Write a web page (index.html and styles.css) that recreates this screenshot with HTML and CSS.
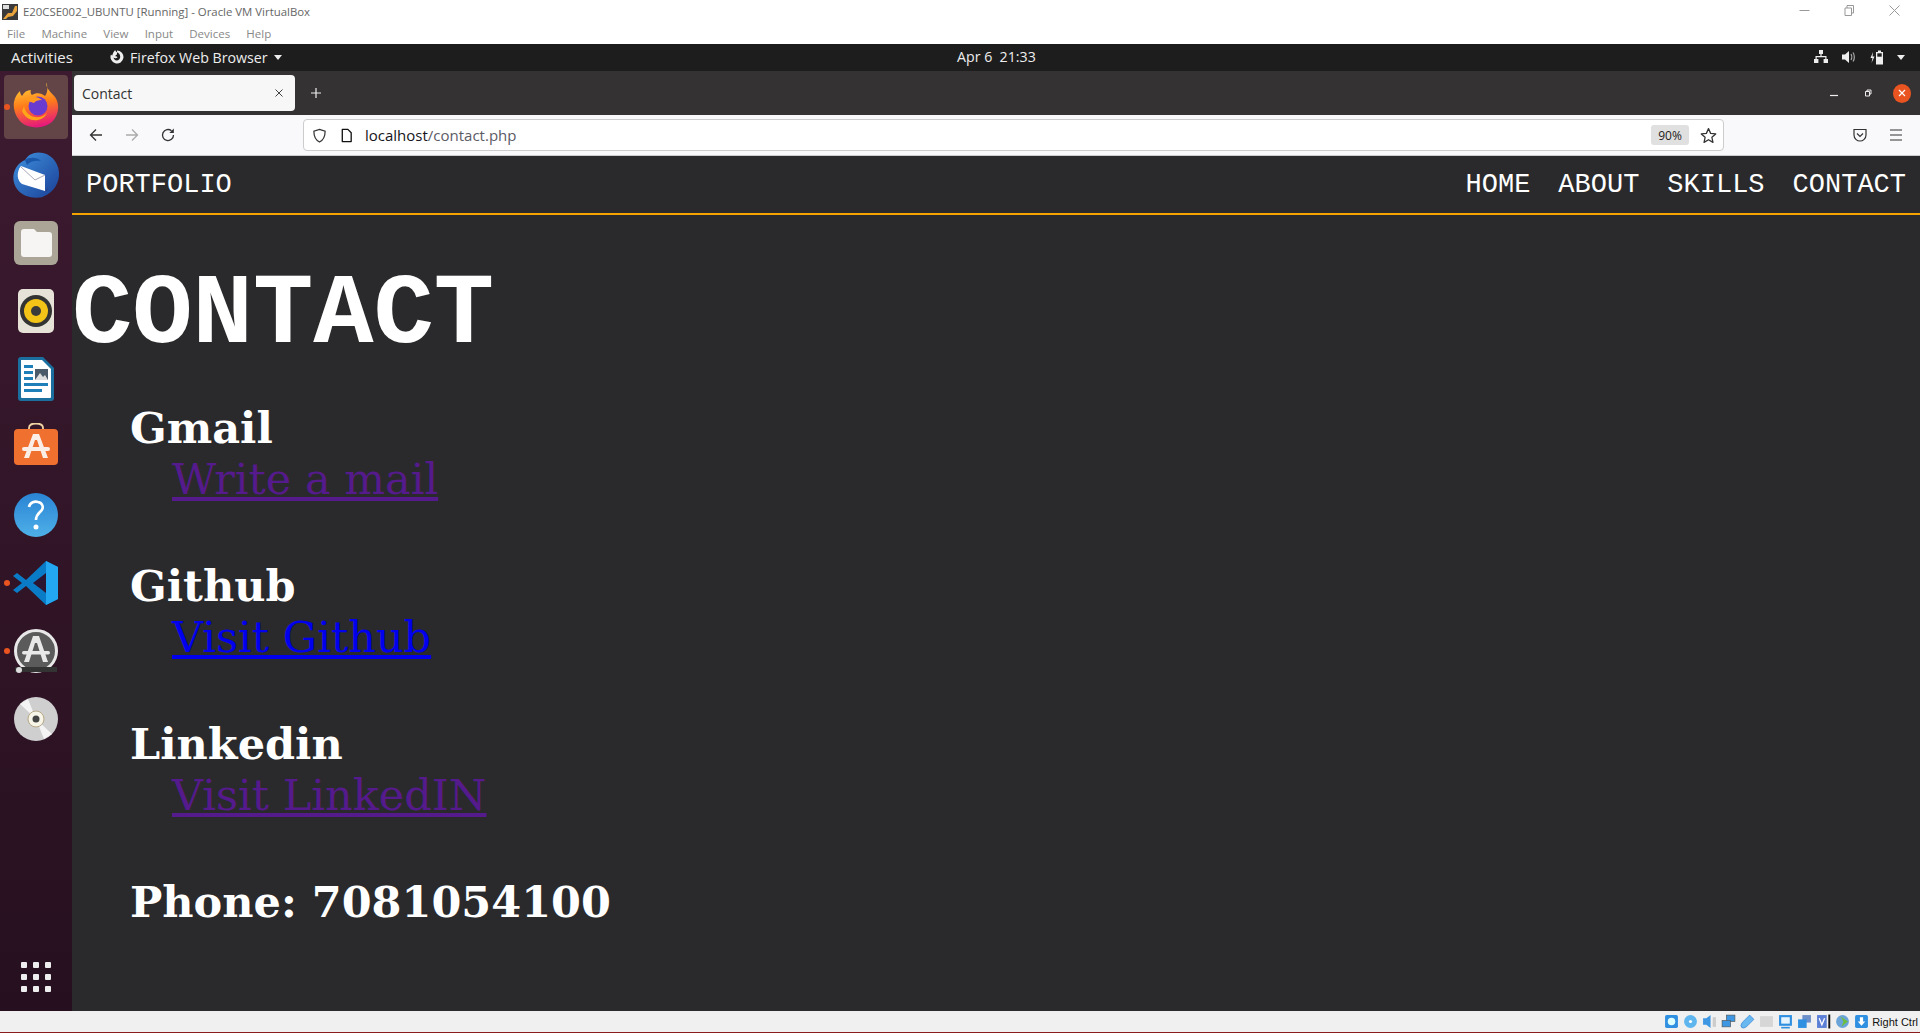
FILE: index.html
```html
<!DOCTYPE html>
<html lang="en">
<head>
<meta charset="utf-8">
<title>Contact</title>
<link rel="stylesheet" href="styles.css">
</head>
<body>
<div class="screen">
  <header class="vb-title">
    <svg class="vb-logo" viewBox="0 0 16 16"><rect width="16" height="16" fill="#3a3a3a"/><path d="M1 15 L6 9 L10 9 L13 2 L15 2 L15 7 L11 12 L6 13 L4 15Z" fill="#e8a33a"/><rect x="1" y="1" width="6" height="4" fill="#ddd"/></svg>
    <span class="vb-title-text">E20CSE002_UBUNTU [Running] - Oracle VM VirtualBox</span>
    <div class="vb-controls">
      <svg viewBox="0 0 11 11"><path d="M0.500 5.500H10.500" stroke="#999" fill="none"/></svg>
      <svg viewBox="0 0 11 11"><path d="M1 3H7.500V10.500H1ZM3 3V0.500H9.500V8H7.500" stroke="#999" fill="none"/></svg>
      <svg viewBox="0 0 11 11"><path d="M0.500 0.500L10.500 10.500M10.500 0.500L0.500 10.500" stroke="#999" fill="none"/></svg>
    </div>
  </header>
  <nav class="vb-menu"><span>File</span><span>Machine</span><span>View</span><span>Input</span><span>Devices</span><span>Help</span></nav>

  <div class="gnome-bar">
    <span class="activities">Activities</span>
    <span class="app-menu">
      <svg class="app-icon" viewBox="0 0 16 16"><path fill-rule="evenodd" d="M8 1.500A6.500 6.500 0 1 1 2 5.500C2.400 6 2.800 6.400 3.300 6.600C3.500 4.800 4.600 2.600 6.300 1C6.400 2 6.900 2.700 8 3.300C10 4.200 11.300 5.800 11.200 8C11 10.200 9.400 11.500 7.800 11.500C6 11.500 4.600 10 4.600 8.500C5.500 9.400 7.600 9.600 8.500 8.300C8.100 7.400 7.100 7.100 6.200 7.300C6.400 6.300 7.200 5.700 8 5.400Z" fill="#eee"/></svg>
      Firefox Web Browser <i class="caret"></i>
    </span>
    <span class="clock">Apr 6&nbsp; 21:33</span>
    <span class="tray">
      <svg viewBox="0 0 16 16" class="tray-net"><path d="M6 1H10V5H8.600V7H13.500V10H15V14H10.600V10H12.300V8.200H3.700V10H5.400V14H1V10H2.500V7H7.400V5H6Z" fill="#eee"/></svg>
      <svg viewBox="0 0 16 16" class="tray-vol"><path d="M1 5.500H4L8 2V14L4 10.500H1Z" fill="#eee"/><path d="M10 5C11 6.500 11 9.500 10 11M12 3.500C13.800 6 13.800 10 12 12.500" stroke="#aaa" stroke-width="1.200" fill="none"/></svg>
      <svg viewBox="0 0 16 16" class="tray-bat"><path d="M7 3H9V1.500H12V3H14V15.500H7Z" fill="#eee"/><rect x="8.300" y="4.300" width="4.400" height="3.400" fill="#1d1d1d"/><path d="M4 3L1.500 9H3.500L2.500 14L5.500 7.500H3.500Z" fill="#eee"/></svg>
      <i class="caret caret-tray"></i>
    </span>
  </div>

  <div class="desktop">
    <aside class="dock">
      <div class="dock-item active"><i class="run-dot"></i>
        <svg viewBox="-1 1 48 48"><defs><linearGradient id="ff" x1="0.300" y1="0" x2="0.500" y2="1"><stop offset="0" stop-color="#ffd83a"/><stop offset="0.500" stop-color="#ff7b1a"/><stop offset="1" stop-color="#e5167e"/></linearGradient></defs><path d="M33 0C33 7 38 10 42 15C47 22 46 33 39 40C31 47 17 47 9 41C2 35 0 26 1 20C2 15 4 12 7 9C7 11 8 13 9 14C11 10 14 8 18 8C17 10 18 12 19 13C23 10 29 11 32 14C35 10 35 5 33 0Z" fill="url(#ff)"/><circle cx="25" cy="24" r="9.500" fill="#6a3bd0"/><path d="M12 17C17 14 24 14 29 18C25 18 22 19 21 21C18 20 14 19 12 17Z" fill="#ff9a20"/><path d="M11 24C13 35 26 39 34 31C29 41 14 41 9 29Z" fill="#ffa51a"/></svg></div>
      <div class="dock-item">
        <svg viewBox="0 0 48 48"><defs><linearGradient id="tb" x1="0" y1="0" x2="1" y2="1"><stop offset="0" stop-color="#3f92e0"/><stop offset="1" stop-color="#1a3f96"/></linearGradient></defs><path d="M13 9C16 3 24 0 31 2C41 4 48 14 47 25C46 35 39 44 29 46C33 42 35 40 36 36L31 46C22 48 11 46 5 38C0 31 0 21 6 14C8 12 10 10 13 9Z" fill="url(#tb)"/><path d="M9 15L33 24V40L10 33C5 30 4 21 9 15Z" fill="#fff"/><path d="M9 16L23 29L33 24" stroke="#aab" fill="none"/><path d="M13 9C17 6 25 6 29 10C24 9 18 10 15 14Z" fill="#1a57a8"/></svg></div>
      <div class="dock-item">
        <svg viewBox="0 0 48 48"><rect x="2" y="2" width="44" height="44" rx="6" fill="#aaa596"/><path d="M9 13Q9 10 12 10H22L25 13H37Q40 13 40 16V35Q40 38 37 38H12Q9 38 9 35Z" fill="#f6f5f3"/></svg></div>
      <div class="dock-item">
        <svg viewBox="0 0 48 48"><rect x="6" y="2" width="36" height="44" rx="5" fill="#e6e2d8"/><circle cx="24" cy="24" r="16" fill="#333"/><circle cx="24" cy="24" r="12" fill="#f3c318"/><circle cx="24" cy="24" r="5" fill="#3a3a3a"/></svg></div>
      <div class="dock-item">
        <svg viewBox="0 0 48 48"><path d="M6 5Q6 2 9 2H31L42 13V43Q42 46 39 46H9Q6 46 6 43Z" fill="#1b6f9f"/><path d="M9 5H30L39 14V42Q39 43 38 43H10Q9 43 9 42Z" fill="#fff"/><path d="M12 10H21V13H12ZM12 16H21V19H12ZM12 22H21V25H12ZM12 28H36V31H12ZM12 34H30V37H12Z" fill="#1f7fb8"/><rect x="23" y="14" width="13" height="11" fill="#4a5a68"/><path d="M23 25L28 18L31 22L33 20L36 25Z" fill="#ddd"/></svg></div>
      <div class="dock-item">
        <svg viewBox="0 0 48 48"><path d="M17 8V5Q17 0.500 24 0.500Q31 0.500 31 5V8" stroke="#f2d3a4" stroke-width="1.800" fill="none"/><rect x="2" y="6" width="44" height="36" rx="4" fill="#f0702f"/><path d="M21 11H27L36 35H31L25 17H23L17 35H12Z" fill="#fbeee6"/><rect x="10" y="24" width="28" height="4" rx="2" fill="#fbeee6"/></svg></div>
      <div class="dock-item">
        <svg viewBox="0 0 48 48"><defs><linearGradient id="hp" x1="0" y1="0" x2="0" y2="1"><stop offset="0" stop-color="#2a84d4"/><stop offset="1" stop-color="#4eb0e8"/></linearGradient></defs><circle cx="24" cy="24" r="22" fill="url(#hp)"/><path d="M17 16C18 11 23 10 26 11C31 12 32 17 29 20C26 23 24 24 24 29" stroke="#fff" stroke-width="2.600" fill="none"/><circle cx="24" cy="36" r="2.500" fill="#fff"/></svg></div>
      <div class="dock-item"><i class="run-dot"></i>
        <svg viewBox="0 0 48 48"><path d="M34 2L46 8V40L34 46L14 27L5 34L1 31L10 24L1 17L5 14L14 21Z" fill="#0a7bc6"/><path d="M34 2L46 8V40L34 46Z" fill="#22a7f0"/><path d="M34 14L21 24L34 34Z" fill="#2c1530"/></svg></div>
      <div class="dock-item"><i class="run-dot"></i>
        <svg viewBox="0 0 48 48"><circle cx="24" cy="24" r="20.500" fill="#5b5b5b" stroke="#e8e8e8" stroke-width="3"/><path d="M21 9H27L36 35H31L25 16H23L17 35H12Z" fill="#e8e8e8"/><rect x="10" y="24" width="28" height="3.500" rx="1.700" fill="#e8e8e8"/><rect x="3" y="40" width="42" height="5" fill="#333"/><circle cx="7" cy="43" r="3" fill="#ddd"/></svg></div>
      <div class="dock-item">
        <svg viewBox="0 0 48 48"><circle cx="24" cy="24" r="22" fill="#cfcfcf"/><path d="M8 9L24 24L16 4ZM40 39L24 24L32 44Z" fill="#f4f4f4"/><circle cx="24" cy="24" r="8" fill="#f7f4e8" stroke="#b7a888"/><circle cx="24" cy="24" r="3.500" fill="#444"/></svg></div>
      <div class="dock-grid"><i></i><i></i><i></i><i></i><i></i><i></i><i></i><i></i><i></i></div>
    </aside>

    <div class="browser">
      <div class="tabbar">
        <div class="tab"><span>Contact</span>
          <svg viewBox="0 0 10 10"><path d="M1.500 1.500L8.500 8.500M8.500 1.500L1.500 8.500" stroke="#444" fill="none"/></svg></div>
        <svg class="new-tab" viewBox="0 0 12 12"><path d="M6 1V11M1 6H11" stroke="#eee" stroke-width="1.200" fill="none"/></svg>
        <div class="win-controls">
          <svg viewBox="0 0 10 10"><path d="M1 7.500H9" stroke="#eee" stroke-width="1.200" fill="none"/></svg>
          <svg viewBox="0 0 10 10"><path d="M2.500 3.500H6.500V8H2.500ZM4 3.500V2H8V6H6.500" stroke="#eee" fill="none"/></svg>
          <span class="win-close"><svg viewBox="0 0 10 10"><path d="M2 2L8 8M8 2L2 8" stroke="#fff" stroke-width="1.200" fill="none"/></svg></span>
        </div>
      </div>
      <div class="toolbar">
        <svg class="tool" viewBox="0 0 16 16"><path d="M14 8H2.500M8 2.500L2.500 8L8 13.500" stroke="#333" stroke-width="1.300" fill="none"/></svg>
        <svg class="tool tool-fwd" viewBox="0 0 16 16"><path d="M2 8H13.500M8 2.500L13.500 8L8 13.500" stroke="#aaa" stroke-width="1.300" fill="none"/></svg>
        <svg class="tool tool-reload" viewBox="0 0 16 16"><path d="M13.500 8A5.500 5.500 0 1 1 11.500 3.800" stroke="#333" stroke-width="1.300" fill="none"/><path d="M13.800 1.500V6H9.300Z" fill="#333"/></svg>
        <div class="urlbar">
          <svg class="url-shield" viewBox="0 0 16 16"><path d="M8 1.500L14 3.500C14 9 12 13 8 15C4 13 2 9 2 3.500Z" stroke="#333" stroke-width="1.300" fill="none"/></svg>
          <svg class="url-page" viewBox="0 0 16 16"><path d="M3.500 1.500H9.500L13 5V14.500H3.500Z" stroke="#111" stroke-width="1.400" fill="none" stroke-linejoin="round"/></svg>
          <span class="url-text"><b>localhost</b>/contact.php</span>
          <span class="zoom-pill">90%</span>
          <svg class="url-star" viewBox="0 0 16 16"><path d="M8 1.500L10 6L14.800 6.500L11.200 9.700L12.200 14.500L8 12L3.800 14.500L4.800 9.700L1.200 6.500L6 6Z" stroke="#333" stroke-width="1.200" fill="none" stroke-linejoin="round"/></svg>
        </div>
        <svg class="tool tool-pocket" viewBox="0 0 16 16"><path d="M2 2.500H14V8C14 11.500 11 14 8 14C5 14 2 11.500 2 8Z" stroke="#333" stroke-width="1.200" fill="none"/><path d="M5 6.500L8 9.500L11 6.500" stroke="#333" stroke-width="1.200" fill="none"/></svg>
        <svg class="tool tool-menu" viewBox="0 0 16 16"><path d="M2 3H14M2 8H14M2 13H14" stroke="#333" stroke-width="1.200" fill="none"/></svg>
      </div>
      <main class="page">
        <nav class="site-nav">
          <a class="brand">PORTFOLIO</a>
          <div class="site-links"><a>HOME</a><a>ABOUT</a><a>SKILLS</a><a>CONTACT</a></div>
        </nav>
        <h1 class="page-title">CONTACT</h1>
        <div class="contacts">
          <section class="contact"><h2>Gmail</h2><a href="#" class="link visited">Write a mail</a></section>
          <section class="contact"><h2>Github</h2><a href="#" class="link">Visit Github</a></section>
          <section class="contact"><h2>Linkedin</h2><a href="#" class="link visited">Visit LinkedIN</a></section>
          <section class="contact"><h2>Phone: 7081054100</h2></section>
        </div>
      </main>
    </div>
  </div>

  <footer class="vb-status">
    <svg viewBox="0 0 14 14"><rect x="1" y="1" width="12" height="12" rx="1.500" fill="#2f8fe0"/><circle cx="7" cy="7" r="3.500" fill="#dff"/></svg>
    <svg viewBox="0 0 14 14"><circle cx="7" cy="7" r="6" fill="#5fb5ee"/><circle cx="7" cy="7" r="1.500" fill="#fff"/></svg>
    <svg viewBox="0 0 14 14"><path d="M1 4H4L8 1V13L4 10H1Z" fill="#3d97e2"/><rect x="10" y="3" width="3" height="9" fill="#ccc"/></svg>
    <svg viewBox="0 0 14 14"><rect x="5" y="1" width="8" height="6" fill="#3d97e2" stroke="#555" stroke-width=".6"/><rect x="1" y="6" width="8" height="6" fill="#3d97e2" stroke="#555" stroke-width=".6"/></svg>
    <svg viewBox="0 0 14 14"><path d="M9 1L13 5L6 12Q3 14 1.500 12.500Q0 11 2 8Z" fill="#6ab8f0" stroke="#2f7fd0" stroke-width=".6"/></svg>
    <svg viewBox="0 0 14 14"><rect x="1" y="2" width="12" height="10" fill="#d6d6d6"/></svg>
    <svg viewBox="0 0 14 14"><rect x="1" y="1" width="12" height="10" fill="#2f8fe0"/><rect x="3" y="3" width="8" height="6" fill="#e6f4ff"/><rect x="3" y="12" width="8" height="1.500" fill="#2f8fe0"/></svg>
    <svg viewBox="0 0 14 14"><rect x="5" y="1" width="8" height="7" fill="#6d8fc9"/><rect x="1" y="5" width="8" height="8" fill="#2f8fe0"/></svg>
    <svg viewBox="0 0 14 14"><rect x="1" y="1" width="9" height="12" fill="#5b7fd6"/><path d="M3 4L5.500 10L8 4" stroke="#fff" stroke-width="1.200" fill="none"/><rect x="11.500" y="0.500" width="1.800" height="13" fill="#111"/></svg>
    <svg viewBox="0 0 14 14"><circle cx="7" cy="7" r="6" fill="#6aa4d8"/><path d="M5 2L12 7L6 12L8 7Z" fill="#6fbf3a"/></svg>
    <svg viewBox="0 0 14 14"><rect x="1" y="1" width="12" height="12" rx="1.500" fill="#2f8fe0"/><path d="M5.500 3H8.500V7H10.500L7 11L3.500 7H5.500Z" fill="#fff"/></svg>
    <span class="status-key">Right Ctrl</span>
  </footer>
</div>
</body>
</html>
```
FILE: styles.css
```css
* { box-sizing: border-box; }
html, body { margin: 0; height: 100%; overflow: hidden; }
body { font-family: "Open Sans", "Noto Sans", sans-serif; background: #fff; }
.screen { width: 1920px; height: 1033px; display: flex; flex-direction: column; }

.vb-title { height: 23px; display: flex; align-items: center; padding-left: 2px; background: #fff; }
.vb-logo { width: 16px; height: 16px; margin-right: 5px; }
.vb-title-text { font-size: 11.400px; color: #666; }
.vb-controls { margin-left: auto; display: flex; gap: 34px; padding-right: 20px; margin-top: -3px; }
.vb-controls svg { width: 11px; height: 11px; }
.vb-menu { height: 21px; display: flex; gap: 16.200px; align-items: center; padding-left: 7px; font-size: 11.500px; color: #888; background: #fff; }

.gnome-bar { height: 27px; background: #1d1d1d; color: #eee; font-size: 14.200px; display: flex; align-items: center; position: relative; padding: 0 0 1px 11px; }
.activities { width: 98px; font-size: 15px; }
.app-menu { display: flex; align-items: center; gap: 5px; }
.app-icon { width: 16px; height: 16px; }
.caret { display: inline-block; width: 0; height: 0; border: 4.500px solid transparent; border-top: 5px solid #eee; border-bottom: 0; margin-left: 1px; }
.clock { position: absolute; left: 957px; top: 4px; line-height: 18px; }
.tray { margin-left: auto; display: flex; align-items: center; gap: 12px; padding-right: 15px; }
.tray svg { width: 16px; height: 16px; }
.caret-tray { margin-left: 0; }

.desktop { flex: 1; display: flex; min-height: 0; }
.dock { width: 72px; flex: none; background: linear-gradient(#3d1a30, #26101f); display: flex; flex-direction: column; align-items: center; padding-top: 4px; position: relative; }
.dock-item { width: 64px; height: 68px; flex: none; display: flex; align-items: center; justify-content: center; position: relative; }
.dock-item svg { width: 48px; height: 48px; }
.dock-item.active { height: 64px; margin-bottom: 2px; background: #634548; border-radius: 4px; }
.run-dot { position: absolute; left: 0; top: 50%; width: 6px; height: 6px; margin-top: -3px; border-radius: 50%; background: #e95420; }
.dock-grid { margin-top: auto; margin-bottom: 19px; display: grid; grid-template-columns: repeat(3, 6px); gap: 6px; }
.dock-grid i { width: 6px; height: 6px; background: #eee; border-radius: 1px; }

.browser { flex: 1; min-width: 0; display: flex; flex-direction: column; }
.tabbar { height: 44px; background: #353234; display: flex; align-items: center; padding: 0 0 0 2px; }
.tab { width: 221px; height: 36px; background: #f7f7f7; border-radius: 4px; display: flex; align-items: center; justify-content: space-between; padding: 0 11px 0 8px; font-size: 14px; color: #333; }
.tab svg { width: 10px; height: 10px; }
.new-tab { width: 12px; height: 12px; margin-left: 15px; }
.win-controls { margin-left: auto; display: flex; align-items: center; gap: 24px; padding-right: 9px; }
.win-controls > svg { width: 10px; height: 10px; }
.win-close { width: 18px; height: 19px; border-radius: 50%; background: #e95420; display: flex; align-items: center; justify-content: center; margin-left: -4px; }
.win-close svg { width: 10px; height: 10px; }

.toolbar { height: 41px; background: #f9f9fb; border-bottom: 1px solid #ccc; display: flex; align-items: center; padding-left: 16px; }
.tool { width: 16px; height: 16px; flex: none; }
.tool-fwd { margin-left: 20px; }
.tool-reload { margin-left: 20px; }
.urlbar { width: 1421px; height: 32px; margin-left: 127px; background: #fff; border: 1px solid #ccc; border-radius: 4px; display: flex; align-items: center; padding-left: 8px; font-size: 15px; color: #5b5b66; }
.urlbar b { font-weight: 400; color: #15141a; }
.url-shield { width: 15px; height: 15px; }
.url-page { width: 15px; height: 15px; margin-left: 12px; }
.url-text { margin-left: 11px; }
.zoom-pill { margin-left: auto; width: 38px; height: 20px; background: #e0e0e0; border-radius: 3px; font-size: 12px; color: #222; display: flex; align-items: center; justify-content: center; }
.url-star { width: 17px; height: 17px; margin: 0 6px 0 11px; }
.tool-pocket { margin-left: auto; }
.tool-menu { margin-left: 20px; margin-right: 16px; }

.page { flex: 1; background: #2a2a2c; color: #fff; overflow: hidden; }
.site-nav { height: 59px; border-bottom: 2px solid #f5a300; display: flex; align-items: center; justify-content: space-between; padding: 1px 14px 0; font-family: "Liberation Mono", monospace; font-size: 27px; }
.site-links { display: flex; gap: 28px; }
.page-title { margin: 50px 0 0; font-family: "Liberation Mono", monospace; font-weight: 700; font-size: 100.500px; line-height: 100px; }
.contacts { padding-left: 58px; margin-top: 38px; font-family: "DejaVu Serif", serif; display: flex; flex-direction: column; gap: 56px; }
.contact h2 { margin: 0; font-size: 43px; line-height: 51px; font-weight: 700; }
.link { display: block; width: max-content; margin-left: 42px; font-size: 43px; line-height: 51px; color: #0000ee; text-decoration: underline; }
.link.visited { color: #551a8b; }

.vb-status { height: 22px; flex: none; background: #f0f0f0; border-bottom: 1px solid #8a1c1c; display: flex; align-items: center; justify-content: flex-end; gap: 4px; padding-right: 2px; font-family: "Liberation Sans", sans-serif; font-size: 11px; color: #111; }
.vb-status svg { width: 15px; height: 15px; }
.status-key { margin-left: -1px; }
```
